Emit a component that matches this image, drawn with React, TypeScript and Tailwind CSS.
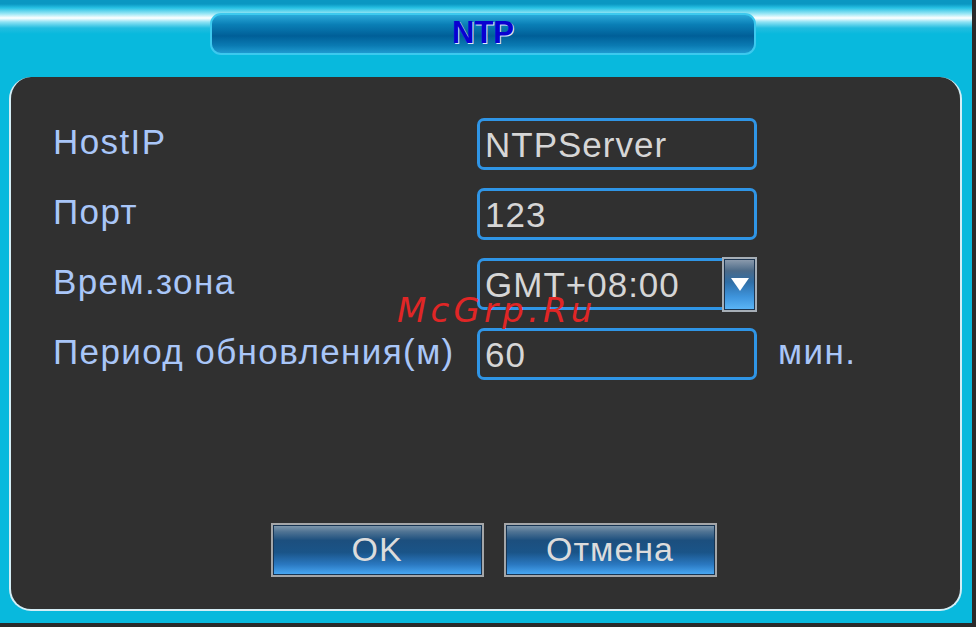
import React from "react";

const font = { fontFamily: '"Liberation Sans", Arial, sans-serif' };

function Field({ label, children }: { label: string; children: React.ReactNode }) {
  return (
    <div className="flex items-center h-[52px]">
      <div className="w-[466px] pl-[42px] text-[35px] leading-none text-[#a9c6f8] tracking-[1.4px] -mt-[6px] whitespace-nowrap">{label}</div>
      {children}
    </div>
  );
}

function Box({ value, w = "w-[280px]" }: { value: string; w?: string }) {
  return (
    <div className={`${w} h-[52px] rounded-[7px] border-[3px] border-[#2f95e6] flex items-center pl-[5px] text-[35px] leading-none tracking-[1px] text-[#d6d6d6]`}>
      {value}
    </div>
  );
}

function Btn({ label }: { label: string }) {
  return (
    <div className="w-[213px] h-[54px] border-2 border-[#a4a6a8] p-0">
      <div className="w-full h-full border border-[#173452] bg-[linear-gradient(to_bottom,#7d96ab_0%,#4f7393_12%,#1c4f7e_30%,#1a5488_55%,#2a78c0_80%,#47a6f2_100%)] flex items-center justify-center text-[34px] leading-none tracking-[1px] text-[#dcdcdc] pb-[2px]">
        {label}
      </div>
    </div>
  );
}

export default function App() {
  return (
    <div className="w-[976px] h-[627px] bg-[#2a2a2a] overflow-hidden" style={font}>
      <div className="relative w-[972px] h-[623px] flex flex-col bg-[linear-gradient(to_bottom,#0a97c2_0px,#0a97c2_4px,#28c2e4_8px,#9ee8f6_14px,#ffffff_18px,#8ee2f4_22px,#22bde0_28px,#08b9dd_34px,#08b9dd_100%)]">
        {/* Title bar */}
        <div className="pt-[13px] pl-[210px]">
          <div className="w-[546px] h-[42px] rounded-[11px] border-2 border-[#3cc9ee] bg-[linear-gradient(to_bottom,#2aa9d9_0%,#0a7fb6_25%,#005f98_55%,#0a7ab2_80%,#1e9ad0_100%)] flex items-center justify-center">
            <span className="text-[31px] font-bold leading-none text-[#0a00d0] [text-shadow:1px_1px_0_#dfe6ff] -mt-[4px]">NTP</span>
          </div>
        </div>

        {/* Panel */}
        <div className="mt-[22px] ml-[9px] w-[953px] h-[534px] rounded-[22px] bg-[#303030] border-x-2 border-b-2 border-t-0 border-[#d4eef6] flex flex-col">
          <div className="pt-[41px] flex flex-col gap-[18px]">
            <Field label="HostIP">
              <Box value="NTPServer" />
            </Field>
            <Field label="Порт">
              <Box value="123" />
            </Field>
            <Field label="Врем.зона">
              <div className="flex items-center">
                <div className="w-[247px] h-[52px] rounded-l-[7px] border-[3px] border-r-0 border-[#2f95e6] flex items-center pl-[5px] text-[35px] leading-none tracking-[1px] text-[#d6d6d6]">
                  GMT+08:00
                </div>
                <div className="w-[35px] h-[55px] border-2 border-[#a6aeb6] -ml-[2px]">
                  <div className="w-full h-full border border-[#1d3550] bg-[linear-gradient(to_bottom,#8a9aac_0%,#4c6a88_22%,#2f6ea6_45%,#3e94dc_75%,#5ab4f6_100%)] flex items-center justify-center">
                    <svg width="20" height="16" viewBox="0 0 20 16">
                      <polygon points="1,2 19,2 10,15" fill="#ffffff" />
                    </svg>
                  </div>
                </div>
              </div>
            </Field>
            <Field label="Период обновления(м)">
              <Box value="60" />
              <span className="ml-[21px] text-[35px] leading-none tracking-[1.4px] text-[#a9c6f8] -mt-[6px]">мин.</span>
            </Field>
          </div>

          <div className="mt-auto mb-[32px] flex justify-center gap-[20px] pl-[16px]">
            <Btn label="OK" />
            <Btn label="Отмена" />
          </div>
        </div>

        {/* watermark */}
        <div
          className="absolute left-[397px] top-[293px] text-[34px] italic leading-none text-[#e02626] tracking-[4.2px]"
          style={{ fontFamily: '"DejaVu Sans", sans-serif' }}
        >
          McGrp.Ru
        </div>
      </div>
    </div>
  );
}
